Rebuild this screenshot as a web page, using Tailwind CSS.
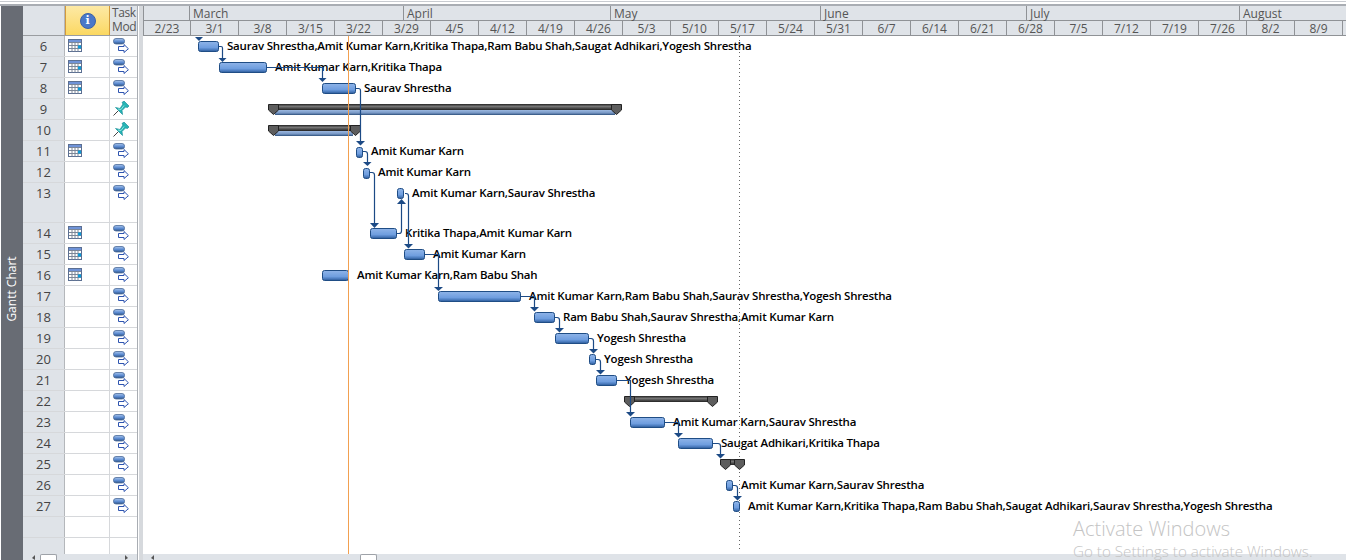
<!DOCTYPE html>
<html>
<head>
<meta charset="utf-8">
<script src="https://cdn.jsdelivr.net/npm/@tailwindcss/browser@4"></script>
</head>
<body class="m-0 bg-white">
<svg width="0" height="0" class="absolute">
  <defs>
    <linearGradient id="bar" x1="0" y1="0" x2="0" y2="1">
      <stop offset="0" stop-color="#8fb4e8"/><stop offset="0.6" stop-color="#6f9edf"/><stop offset="0.85" stop-color="#4677ba"/><stop offset="1" stop-color="#2a5690"/>
    </linearGradient>
    <linearGradient id="band" x1="0" y1="0" x2="0" y2="1">
      <stop offset="0" stop-color="#222"/><stop offset="0.4" stop-color="#777"/><stop offset="1" stop-color="#222"/>
    </linearGradient>
    <linearGradient id="band2" x1="0" y1="0" x2="0" y2="1">
      <stop offset="0" stop-color="#9db9e0"/><stop offset="0.6" stop-color="#7696c4"/><stop offset="1" stop-color="#2c4f7a"/>
    </linearGradient>
    <linearGradient id="pill" x1="0" y1="0" x2="0" y2="1">
      <stop offset="0" stop-color="#a9c6ee"/><stop offset="0.55" stop-color="#5b8ad0"/><stop offset="1" stop-color="#2d5488"/>
    </linearGradient>
    <symbol id="cal" viewBox="0 0 14 13">
      <rect x="0.5" y="0.5" width="13" height="12" fill="#fff" stroke="#5b6f92"/>
      <rect x="1" y="1" width="12" height="2.5" fill="#6f93d8"/>
      <path d="M1 3.5H13M1 6.5H13M1 9.5H13M4 3.5V12.5M7 3.5V12.5M10 3.5V12.5" stroke="#7c8798" stroke-width="1" fill="none"/>
      <rect x="10" y="6.5" width="3" height="3" fill="#0a9bd8"/>
    </symbol>
    <symbol id="mode" viewBox="0 0 16 15">
      <rect x="0.5" y="0.5" width="11" height="5.5" rx="2.5" fill="url(#pill)" stroke="#4a6a98" stroke-width="0.8"/>
      <path d="M5.5 8.5H11V6.5L15.4 10.75L11 14.5V12.5H5.5Z" fill="#fff" stroke="#2f55b0" stroke-width="1"/>
    </symbol>
    <symbol id="pin" viewBox="0 0 16 15">
      <path d="M0.5 14.5L5.5 9.5" stroke="#444" stroke-width="1"/>
      <path d="M2.5 6.5L7 7.5L10 3L9 1.5L11 0L16 5L14.5 6.5L12.5 6L9 9.5L9.5 13.5Z" fill="#27b5b5" stroke="#1b8f9a" stroke-width="0.7"/>
      <path d="M5 8L8 8.5L11 4.5" stroke="#8ee6e0" stroke-width="1" fill="none"/>
    </symbol>
  </defs>
</svg>
<div class="relative w-[1346px] h-[560px] overflow-hidden bg-white text-[#444] font-['Open_Sans',sans-serif]">
  <!-- top strip -->
  <div class="h-[6px] bg-white border-b-2 border-[#a9adb3]">
    <div class="h-[2px] border-b border-[#c8cbd0]"></div>
  </div>
  <div class="flex h-[554px]">
    <!-- vertical view bar -->
    <div class="w-[1px] bg-white"></div>
    <div class="w-[22px] bg-[#686c74] flex items-center justify-center">
      <span class="text-[12px] text-white whitespace-nowrap -rotate-90 translate-y-[6px]">Gantt Chart</span>
    </div>
    <!-- table -->
    <div class="w-[114px] flex flex-col text-[13px]">
      <div class="flex h-[30px] shrink-0 border-b border-[#9a9da1]">
        <div class="w-[42px] bg-[#dfe3e8] border-r border-[#b4b7bb]"></div>
        <div class="w-[45px] bg-gradient-to-b from-[#fde9a4] to-[#fbd860] border-x border-[#d29a3c] flex items-center justify-center">
          <span class="w-[16px] h-[16px] rounded-full bg-[#4a78c8] border border-[#3c62a8] text-white text-[11px] font-bold leading-[14px] text-center font-['DejaVu_Serif',serif]">i</span>
        </div>
        <div class="w-[27px] bg-[#dfe3e8] pl-[2px] text-[12px] tracking-[-0.4px] leading-[14px] text-[#555] whitespace-nowrap">Task<br>Mod</div>
      </div>
      <div class="flex-1 flex flex-col">
        <div class="flex h-[21px] border-b border-[#d6d8db]"><div class="w-[42px] bg-[#dfe3e8] border-r border-[#b4b7bb] text-center leading-[20px]">6</div><div class="w-[45px] border-r border-[#d6d8db] pl-[3px] pt-[3px]"><svg width="14" height="13"><use href="#cal"/></svg></div><div class="w-[27px] pl-[3px] pt-[2px]"><svg width="16" height="15"><use href="#mode"/></svg></div></div>
        <div class="flex h-[21px] border-b border-[#d6d8db]"><div class="w-[42px] bg-[#dfe3e8] border-r border-[#b4b7bb] text-center leading-[20px]">7</div><div class="w-[45px] border-r border-[#d6d8db] pl-[3px] pt-[3px]"><svg width="14" height="13"><use href="#cal"/></svg></div><div class="w-[27px] pl-[3px] pt-[2px]"><svg width="16" height="15"><use href="#mode"/></svg></div></div>
        <div class="flex h-[21px] border-b border-[#d6d8db]"><div class="w-[42px] bg-[#dfe3e8] border-r border-[#b4b7bb] text-center leading-[20px]">8</div><div class="w-[45px] border-r border-[#d6d8db] pl-[3px] pt-[3px]"><svg width="14" height="13"><use href="#cal"/></svg></div><div class="w-[27px] pl-[3px] pt-[2px]"><svg width="16" height="15"><use href="#mode"/></svg></div></div>
        <div class="flex h-[21px] border-b border-[#d6d8db]"><div class="w-[42px] bg-[#dfe3e8] border-r border-[#b4b7bb] text-center leading-[20px]">9</div><div class="w-[45px] border-r border-[#d6d8db]"></div><div class="w-[27px] pl-[3px] pt-[2px]"><svg width="16" height="15"><use href="#pin"/></svg></div></div>
        <div class="flex h-[21px] border-b border-[#d6d8db]"><div class="w-[42px] bg-[#dfe3e8] border-r border-[#b4b7bb] text-center leading-[20px]">10</div><div class="w-[45px] border-r border-[#d6d8db]"></div><div class="w-[27px] pl-[3px] pt-[2px]"><svg width="16" height="15"><use href="#pin"/></svg></div></div>
        <div class="flex h-[21px] border-b border-[#d6d8db]"><div class="w-[42px] bg-[#dfe3e8] border-r border-[#b4b7bb] text-center leading-[20px]">11</div><div class="w-[45px] border-r border-[#d6d8db] pl-[3px] pt-[3px]"><svg width="14" height="13"><use href="#cal"/></svg></div><div class="w-[27px] pl-[3px] pt-[2px]"><svg width="16" height="15"><use href="#mode"/></svg></div></div>
        <div class="flex h-[21px] border-b border-[#d6d8db]"><div class="w-[42px] bg-[#dfe3e8] border-r border-[#b4b7bb] text-center leading-[20px]">12</div><div class="w-[45px] border-r border-[#d6d8db]"></div><div class="w-[27px] pl-[3px] pt-[2px]"><svg width="16" height="15"><use href="#mode"/></svg></div></div>
        <div class="flex h-[40px] border-b border-[#d6d8db]"><div class="w-[42px] bg-[#dfe3e8] border-r border-[#b4b7bb] text-center leading-[20px]">13</div><div class="w-[45px] border-r border-[#d6d8db]"></div><div class="w-[27px] pl-[3px] pt-[2px]"><svg width="16" height="15"><use href="#mode"/></svg></div></div>
        <div class="flex h-[21px] border-b border-[#d6d8db]"><div class="w-[42px] bg-[#dfe3e8] border-r border-[#b4b7bb] text-center leading-[20px]">14</div><div class="w-[45px] border-r border-[#d6d8db] pl-[3px] pt-[3px]"><svg width="14" height="13"><use href="#cal"/></svg></div><div class="w-[27px] pl-[3px] pt-[2px]"><svg width="16" height="15"><use href="#mode"/></svg></div></div>
        <div class="flex h-[21px] border-b border-[#d6d8db]"><div class="w-[42px] bg-[#dfe3e8] border-r border-[#b4b7bb] text-center leading-[20px]">15</div><div class="w-[45px] border-r border-[#d6d8db] pl-[3px] pt-[3px]"><svg width="14" height="13"><use href="#cal"/></svg></div><div class="w-[27px] pl-[3px] pt-[2px]"><svg width="16" height="15"><use href="#mode"/></svg></div></div>
        <div class="flex h-[21px] border-b border-[#d6d8db]"><div class="w-[42px] bg-[#dfe3e8] border-r border-[#b4b7bb] text-center leading-[20px]">16</div><div class="w-[45px] border-r border-[#d6d8db] pl-[3px] pt-[3px]"><svg width="14" height="13"><use href="#cal"/></svg></div><div class="w-[27px] pl-[3px] pt-[2px]"><svg width="16" height="15"><use href="#mode"/></svg></div></div>
        <div class="flex h-[21px] border-b border-[#d6d8db]"><div class="w-[42px] bg-[#dfe3e8] border-r border-[#b4b7bb] text-center leading-[20px]">17</div><div class="w-[45px] border-r border-[#d6d8db]"></div><div class="w-[27px] pl-[3px] pt-[2px]"><svg width="16" height="15"><use href="#mode"/></svg></div></div>
        <div class="flex h-[21px] border-b border-[#d6d8db]"><div class="w-[42px] bg-[#dfe3e8] border-r border-[#b4b7bb] text-center leading-[20px]">18</div><div class="w-[45px] border-r border-[#d6d8db]"></div><div class="w-[27px] pl-[3px] pt-[2px]"><svg width="16" height="15"><use href="#mode"/></svg></div></div>
        <div class="flex h-[21px] border-b border-[#d6d8db]"><div class="w-[42px] bg-[#dfe3e8] border-r border-[#b4b7bb] text-center leading-[20px]">19</div><div class="w-[45px] border-r border-[#d6d8db]"></div><div class="w-[27px] pl-[3px] pt-[2px]"><svg width="16" height="15"><use href="#mode"/></svg></div></div>
        <div class="flex h-[21px] border-b border-[#d6d8db]"><div class="w-[42px] bg-[#dfe3e8] border-r border-[#b4b7bb] text-center leading-[20px]">20</div><div class="w-[45px] border-r border-[#d6d8db]"></div><div class="w-[27px] pl-[3px] pt-[2px]"><svg width="16" height="15"><use href="#mode"/></svg></div></div>
        <div class="flex h-[21px] border-b border-[#d6d8db]"><div class="w-[42px] bg-[#dfe3e8] border-r border-[#b4b7bb] text-center leading-[20px]">21</div><div class="w-[45px] border-r border-[#d6d8db]"></div><div class="w-[27px] pl-[3px] pt-[2px]"><svg width="16" height="15"><use href="#mode"/></svg></div></div>
        <div class="flex h-[21px] border-b border-[#d6d8db]"><div class="w-[42px] bg-[#dfe3e8] border-r border-[#b4b7bb] text-center leading-[20px]">22</div><div class="w-[45px] border-r border-[#d6d8db]"></div><div class="w-[27px] pl-[3px] pt-[2px]"><svg width="16" height="15"><use href="#mode"/></svg></div></div>
        <div class="flex h-[21px] border-b border-[#d6d8db]"><div class="w-[42px] bg-[#dfe3e8] border-r border-[#b4b7bb] text-center leading-[20px]">23</div><div class="w-[45px] border-r border-[#d6d8db]"></div><div class="w-[27px] pl-[3px] pt-[2px]"><svg width="16" height="15"><use href="#mode"/></svg></div></div>
        <div class="flex h-[21px] border-b border-[#d6d8db]"><div class="w-[42px] bg-[#dfe3e8] border-r border-[#b4b7bb] text-center leading-[20px]">24</div><div class="w-[45px] border-r border-[#d6d8db]"></div><div class="w-[27px] pl-[3px] pt-[2px]"><svg width="16" height="15"><use href="#mode"/></svg></div></div>
        <div class="flex h-[21px] border-b border-[#d6d8db]"><div class="w-[42px] bg-[#dfe3e8] border-r border-[#b4b7bb] text-center leading-[20px]">25</div><div class="w-[45px] border-r border-[#d6d8db]"></div><div class="w-[27px] pl-[3px] pt-[2px]"><svg width="16" height="15"><use href="#mode"/></svg></div></div>
        <div class="flex h-[21px] border-b border-[#d6d8db]"><div class="w-[42px] bg-[#dfe3e8] border-r border-[#b4b7bb] text-center leading-[20px]">26</div><div class="w-[45px] border-r border-[#d6d8db]"></div><div class="w-[27px] pl-[3px] pt-[2px]"><svg width="16" height="15"><use href="#mode"/></svg></div></div>
        <div class="flex h-[21px] border-b border-[#d6d8db]"><div class="w-[42px] bg-[#dfe3e8] border-r border-[#b4b7bb] text-center leading-[20px]">27</div><div class="w-[45px] border-r border-[#d6d8db]"></div><div class="w-[27px] pl-[3px] pt-[2px]"><svg width="16" height="15"><use href="#mode"/></svg></div></div>
        <div class="flex h-[21px] border-b border-[#d6d8db]"><div class="w-[42px] bg-[#dfe3e8] border-r border-[#b4b7bb]"></div><div class="w-[45px] border-r border-[#d6d8db]"></div><div class="w-[27px]"></div></div>
        <div class="flex flex-1"><div class="w-[42px] bg-[#dfe3e8] border-r border-[#b4b7bb]"></div><div class="w-[45px] border-r border-[#d6d8db]"></div><div class="w-[27px]"></div></div>
      </div>
      <div class="h-[6px] shrink-0 bg-[#dfe3e8] relative flex items-start justify-between px-[8px] text-[#555]">
        <svg width="4" height="6"><path d="M4 1L1 4L4 6Z" fill="#555"/></svg>
        <div class="absolute left-[17px] top-0 w-[17px] h-[6px] bg-white border border-b-0 border-[#9ea2a8] rounded-t-[2px]"></div>
        <svg width="4" height="6"><path d="M0 1L3 4L0 6Z" fill="#555"/></svg>
      </div>
    </div>
    <!-- splitter -->
    <div class="w-[6px] flex border-l border-[#a9adb3]">
      <div class="w-[1px] bg-white"></div>
      <div class="flex-1 bg-[#d6d9dd]"></div>
    </div>
    <!-- chart -->
    <div class="flex-1 flex flex-col min-w-0 relative">
      <div class="h-[15px] shrink-0 flex bg-[#dfe3e8] border-b border-[#8f9296] text-[12px] pt-[1px] leading-[13px] text-[#555] border-l border-[#8f9296]">
        <div class="w-[46px] border-r border-[#8f9296] -mt-[1px]"></div>
        <div class="w-[214px] border-r border-[#8f9296] pl-[3px] -mt-[1px] pt-[1px]">March</div>
        <div class="w-[207px] border-r border-[#8f9296] pl-[3px] -mt-[1px] pt-[1px]">April</div>
        <div class="w-[210px] border-r border-[#8f9296] pl-[3px] -mt-[1px] pt-[1px]">May</div>
        <div class="w-[206px] border-r border-[#8f9296] pl-[3px] -mt-[1px] pt-[1px]">June</div>
        <div class="w-[213px] border-r border-[#8f9296] pl-[3px] -mt-[1px] pt-[1px]">July</div>
        <div class="flex-1 pl-[3px] -mt-[1px] pt-[1px]">August</div>
      </div>
      <div class="h-[15px] shrink-0 flex bg-[#dfe3e8] border-b border-[#8f9296] text-[12px] leading-[13px] text-[#555] text-center border-l border-[#8f9296]">
        <div class="w-[47px] border-r border-[#8f9296] pt-[1px]">2/23</div>
        <div class="w-[48px] border-r border-[#8f9296] pt-[1px]">3/1</div>
        <div class="w-[48px] border-r border-[#8f9296] pt-[1px]">3/8</div>
        <div class="w-[48px] border-r border-[#8f9296] pt-[1px]">3/15</div>
        <div class="w-[48px] border-r border-[#8f9296] pt-[1px]">3/22</div>
        <div class="w-[48px] border-r border-[#8f9296] pt-[1px]">3/29</div>
        <div class="w-[48px] border-r border-[#8f9296] pt-[1px]">4/5</div>
        <div class="w-[48px] border-r border-[#8f9296] pt-[1px]">4/12</div>
        <div class="w-[48px] border-r border-[#8f9296] pt-[1px]">4/19</div>
        <div class="w-[48px] border-r border-[#8f9296] pt-[1px]">4/26</div>
        <div class="w-[48px] border-r border-[#8f9296] pt-[1px]">5/3</div>
        <div class="w-[48px] border-r border-[#8f9296] pt-[1px]">5/10</div>
        <div class="w-[48px] border-r border-[#8f9296] pt-[1px]">5/17</div>
        <div class="w-[48px] border-r border-[#8f9296] pt-[1px]">5/24</div>
        <div class="w-[48px] border-r border-[#8f9296] pt-[1px]">5/31</div>
        <div class="w-[48px] border-r border-[#8f9296] pt-[1px]">6/7</div>
        <div class="w-[48px] border-r border-[#8f9296] pt-[1px]">6/14</div>
        <div class="w-[48px] border-r border-[#8f9296] pt-[1px]">6/21</div>
        <div class="w-[48px] border-r border-[#8f9296] pt-[1px]">6/28</div>
        <div class="w-[48px] border-r border-[#8f9296] pt-[1px]">7/5</div>
        <div class="w-[48px] border-r border-[#8f9296] pt-[1px]">7/12</div>
        <div class="w-[48px] border-r border-[#8f9296] pt-[1px]">7/19</div>
        <div class="w-[48px] border-r border-[#8f9296] pt-[1px]">7/26</div>
        <div class="w-[48px] border-r border-[#8f9296] pt-[1px]">8/2</div>
        <div class="w-[48px] border-r border-[#8f9296] pt-[1px]">8/9</div>
      </div>
      <!-- canvas: origin at page (143,36) -->
      <div class="flex-1 relative overflow-hidden text-[11.5px] tracking-[-0.2px] font-semibold text-black leading-[16px] whitespace-nowrap">
        <span class="absolute left-[84px] top-[2px]">Saurav Shrestha,Amit Kumar Karn,Kritika Thapa,Ram Babu Shah,Saugat Adhikari,Yogesh Shrestha</span>
        <span class="absolute left-[132px] top-[23px]">Amit Kumar Karn,Kritika Thapa</span>
        <span class="absolute left-[221px] top-[44px]">Saurav Shrestha</span>
        <span class="absolute left-[228px] top-[107px]">Amit Kumar Karn</span>
        <span class="absolute left-[235px] top-[128px]">Amit Kumar Karn</span>
        <span class="absolute left-[269px] top-[149px]">Amit Kumar Karn,Saurav Shrestha</span>
        <span class="absolute left-[262px] top-[189px]">Kritika Thapa,Amit Kumar Karn</span>
        <span class="absolute left-[290px] top-[210px]">Amit Kumar Karn</span>
        <span class="absolute left-[214px] top-[231px]">Amit Kumar Karn,Ram Babu Shah</span>
        <span class="absolute left-[386px] top-[252px]">Amit Kumar Karn,Ram Babu Shah,Saurav Shrestha,Yogesh Shrestha</span>
        <span class="absolute left-[420px] top-[273px]">Ram Babu Shah,Saurav Shrestha,Amit Kumar Karn</span>
        <span class="absolute left-[454px] top-[294px]">Yogesh Shrestha</span>
        <span class="absolute left-[461px] top-[315px]">Yogesh Shrestha</span>
        <span class="absolute left-[482px] top-[336px]">Yogesh Shrestha</span>
        <span class="absolute left-[530px] top-[378px]">Amit Kumar Karn,Saurav Shrestha</span>
        <span class="absolute left-[578px] top-[399px]">Saugat Adhikari,Kritika Thapa</span>
        <span class="absolute left-[598px] top-[441px]">Amit Kumar Karn,Saurav Shrestha</span>
        <span class="absolute left-[605px] top-[462px]">Amit Kumar Karn,Kritika Thapa,Ram Babu Shah,Saugat Adhikari,Saurav Shrestha,Yogesh Shrestha</span>

        <svg class="absolute left-0 top-0" width="1203" height="518" viewBox="143 36 1203 518">
          <!-- status line -->
          <path d="M739.5 36V552" stroke="#666" stroke-width="1" stroke-dasharray="1 3"/>
          <!-- summaries -->
          <g>
            <rect x="275" y="110" width="340" height="5" fill="url(#band2)"/>
            <rect x="275" y="104" width="340" height="6" fill="url(#band)"/>
            <rect x="275" y="131" width="78" height="5" fill="url(#band2)"/>
            <rect x="275" y="125" width="78" height="6" fill="url(#band)"/>
            <rect x="628" y="396" width="86" height="6" fill="url(#band)"/>
            <path d="M268.5 104.5H278.5V110L273.5 114.5L268.5 110Z" fill="#5d5d5d" stroke="#222"/>
            <path d="M611.5 104.5H621.5V110L616.5 114.5L611.5 110Z" fill="#5d5d5d" stroke="#222"/>
            <path d="M268.5 125.5H278.5V131L273.5 135.5L268.5 131Z" fill="#5d5d5d" stroke="#222"/>
            <path d="M350.5 125.5H360.5V131L355.5 135.5L350.5 131Z" fill="#5d5d5d" stroke="#222"/>
            <path d="M624.5 396.5H634.5V402L629.5 406.5L624.5 402Z" fill="#5d5d5d" stroke="#222"/>
            <path d="M707.5 396.5H717.5V402L712.5 406.5L707.5 402Z" fill="#5d5d5d" stroke="#222"/>
            <rect x="725" y="459" width="16" height="6" fill="url(#band)"/>
            <path d="M720.5 459.5H730.5V465L725.5 469.5L720.5 465Z" fill="#5d5d5d" stroke="#222"/>
            <path d="M734.5 459.5H744.5V465L739.5 469.5L734.5 465Z" fill="#5d5d5d" stroke="#222"/>
          </g>
          <!-- connectors -->
          <g fill="none" stroke="#1c4a85" stroke-width="1.2">
            <path d="M219 46.5H221Q222.5 46.5 222.5 48V59"/>
            <path d="M267 67.5H322.5V79"/>
            <path d="M356 88.5H358.5Q360.5 88.5 360.5 90.5V142"/>
            <path d="M363 151.5H365Q367.5 151.5 367.5 154V163"/>
            <path d="M370 172.5H372Q374.5 172.5 374.5 175V224"/>
            <path d="M405 193.5H406Q408.5 193.5 408.5 196V245"/>
            <path d="M397 233.5H399Q401.5 233.5 401.5 231V203"/>
            <path d="M425 254.5H438.5V288"/>
            <path d="M521 296.5H534.5V308"/>
            <path d="M555 317.5H557Q559.5 317.5 559.5 320V329"/>
            <path d="M589 338.5H591Q593.5 338.5 593.5 341V350"/>
            <path d="M596 359.5H598Q600.5 359.5 600.5 362V371"/>
            <path d="M617 380.5H630.5V413"/>
            <path d="M665 422.5H678.5V434"/>
            <path d="M713 443.5H718Q720.5 443.5 720.5 446V455"/>
            <path d="M733 485.5H735Q737.5 485.5 737.5 488V497"/>
          </g>
          <!-- arrowheads -->
          <g fill="#1c4a85">
            <path d="M195 37H203L199 41Z"/>
            <path d="M218.5 58H226.5L222.5 62Z"/>
            <path d="M318.5 78H326.5L322.5 82Z"/>
            <path d="M356 141H365L360.5 145.5Z"/>
            <path d="M363 162H371.5L367.5 166Z"/>
            <path d="M370 223H379L374.5 228Z"/>
            <path d="M404 244H413L408.5 248.5Z"/>
            <path d="M397 204H406L401.5 199Z"/>
            <path d="M434 287H443L438.5 291Z"/>
            <path d="M530 307H539L534.5 311.5Z"/>
            <path d="M555 328H564L559.5 332.5Z"/>
            <path d="M589 349H598L593.5 353.5Z"/>
            <path d="M596 370H605L600.5 374.5Z"/>
            <path d="M626 412H635L630.5 416.5Z"/>
            <path d="M674 433H683L678.5 437.5Z"/>
            <path d="M716 454H725L720.5 458.5Z"/>
            <path d="M733 496H742L737.5 500.5Z"/>
          </g>
          <!-- bars -->
          <g fill="url(#bar)" stroke="#1f4d85" stroke-width="1">
            <rect x="198.5" y="41.5" width="20" height="10" rx="2"/>
            <rect x="219.5" y="62.5" width="47" height="10" rx="2"/>
            <rect x="322.5" y="83.5" width="33" height="10" rx="2"/>
            <rect x="356.5" y="147.5" width="6" height="10" rx="2"/>
            <rect x="363.5" y="168.5" width="6" height="10" rx="2"/>
            <rect x="397.5" y="188.5" width="6" height="10" rx="2"/>
            <rect x="370.5" y="228.5" width="26" height="10" rx="2"/>
            <rect x="404.5" y="249.5" width="20" height="10" rx="2"/>
            <rect x="322.5" y="270.5" width="26" height="10" rx="2"/>
            <rect x="438.5" y="291.5" width="82" height="10" rx="2"/>
            <rect x="534.5" y="312.5" width="20" height="10" rx="2"/>
            <rect x="555.5" y="333.5" width="33" height="10" rx="2"/>
            <rect x="589.5" y="354.5" width="6" height="10" rx="2"/>
            <rect x="596.5" y="375.5" width="20" height="10" rx="2"/>
            <rect x="630.5" y="417.5" width="34" height="10" rx="2"/>
            <rect x="678.5" y="438.5" width="34" height="10" rx="2"/>
            <rect x="726.5" y="480.5" width="6" height="10" rx="2"/>
            <rect x="733.5" y="501.5" width="6" height="10" rx="2"/>
          </g>
          <!-- current date -->
          <path d="M348.5 36V554" stroke="#f2a050" stroke-width="1"/>
        </svg>
      </div>
      <div class="h-[6px] shrink-0 bg-[#dfe3e8] relative">
        <svg class="absolute left-[7px] top-0" width="4" height="6"><path d="M4 1L1 4L4 6Z" fill="#555"/></svg>
        <div class="absolute left-[217px] top-0 w-[17px] h-[6px] bg-white border border-b-0 border-[#9ea2a8] rounded-t-[2px]"></div>
      </div>
    </div>
  </div>
  <!-- watermark -->
  <div class="absolute left-[1073px] top-[515px] text-[#c4c4c4] font-light whitespace-nowrap">
    <div class="text-[20px] leading-[28px]">Activate Windows</div>
    <div class="text-[15.2px] leading-[17px]">Go to Settings to activate Windows.</div>
  </div>
</div>
</body>
</html>
